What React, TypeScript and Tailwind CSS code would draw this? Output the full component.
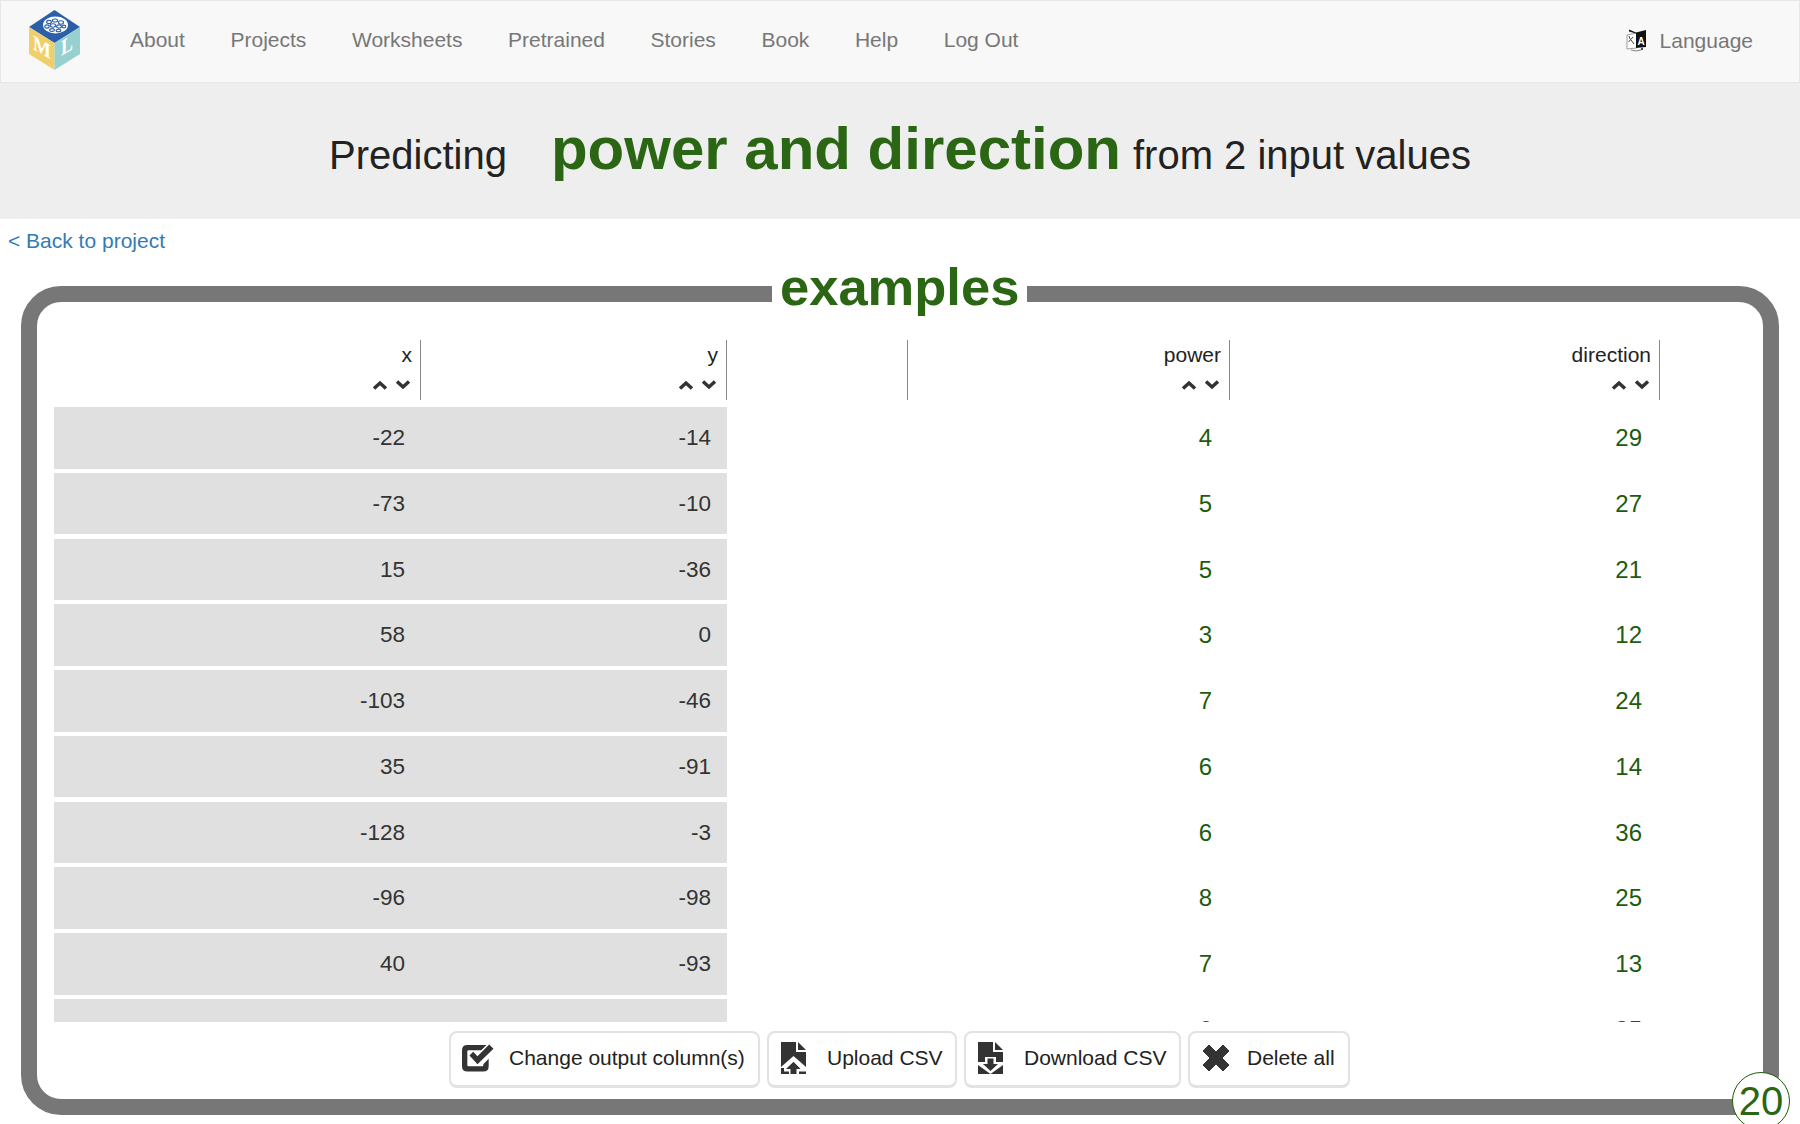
import React from 'react';

const navLinks = ['About', 'Projects', 'Worksheets', 'Pretrained', 'Stories', 'Book', 'Help', 'Log Out'];

const rows = [
  [-22, -14, 4, 29],
  [-73, -10, 5, 27],
  [15, -36, 5, 21],
  [58, 0, 3, 12],
  [-103, -46, 7, 24],
  [35, -91, 6, 14],
  [-128, -3, 6, 36],
  [-96, -98, 8, 25],
  [40, -93, 7, 13],
  [-66, -66, 6, 35],
];

const Logo = () => (
  <svg width="52" height="60" viewBox="0 0 52 60" className="shrink-0">
    <polygon points="25.5,0 51,17 25.5,33 0,17" fill="#2b5fa8" />
    <polygon points="0,17 25.5,33 25.5,60 0,44" fill="#f0cf6b" />
    <polygon points="51,17 25.5,33 25.5,60 51,44" fill="#98d0d0" />
    <ellipse cx="26.5" cy="15" rx="12.5" ry="8.5" fill="#fff" />
    <g fill="none" stroke="#2b5fa8" strokeWidth="1.1">
      <ellipse cx="20" cy="12" rx="2.4" ry="1.6" />
      <ellipse cx="26" cy="10.5" rx="2.6" ry="1.5" />
      <ellipse cx="32" cy="12.5" rx="2.5" ry="1.7" />
      <ellipse cx="18" cy="16.5" rx="2.2" ry="1.6" />
      <ellipse cx="24" cy="15.5" rx="2.6" ry="1.7" />
      <ellipse cx="30" cy="16.5" rx="2.4" ry="1.6" />
      <ellipse cx="35" cy="16.5" rx="1.8" ry="1.4" />
      <ellipse cx="23" cy="20" rx="2.4" ry="1.4" />
      <ellipse cx="29.5" cy="20.5" rx="2.4" ry="1.3" />
    </g>
    <text x="0" y="0" transform="matrix(0.9 0.52 0 1 4 39)" fill="#fff" fontFamily="'Liberation Serif', serif" fontWeight="700" fontSize="21">M</text>
    <text x="0" y="0" transform="matrix(0.85 -0.5 0 1.05 32 46)" fill="#fff" fontFamily="'Liberation Serif', serif" fontWeight="700" fontSize="21">L</text>
  </svg>
);

const LanguageIcon = () => (
  <svg width="21" height="23" viewBox="0 0 21 23" className="shrink-0">
    <path d="M1 6 L10.5 4 L10.5 19 L1 20 Z" fill="#fff" stroke="#888" strokeWidth="0.8" />
    <path d="M3 7 L4 10 M2.5 13 L7 8 M5 11 L8 15" stroke="#444" strokeWidth="1" fill="none" />
    <path d="M10 3.5 L20 1 L20 18 L10 19 Z" fill="#111" />
    <path d="M3 0.5 L10 3.5 L10 4.5 L3 2.5 Z" fill="#111" />
    <text x="11.5" y="15.5" fill="#fff" fontFamily="'Liberation Sans', sans-serif" fontWeight="700" fontSize="10">A</text>
    <path d="M5 21 Q10 23 15 21" stroke="#666" strokeWidth="0.8" fill="none" />
    <circle cx="16" cy="20" r="1" fill="#111" />
  </svg>
);

const CheckIcon = () => (
  <svg width="32" height="30" viewBox="1 3 30 26.5" className="shrink-0 ml-[-1px]">
    <path d="M24 4 H6 Q1 4 1 9 V24 Q1 29 6 29 H21 Q26 29 26 24 V17 L21 22 V23 Q21 24 20 24 H7 Q6 24 6 23 V10 Q6 9 7 9 H19 Z" fill="#333" />
    <path d="M8 14 L11.5 10.5 L15.5 14.5 L26.5 3.5 L30.5 7.5 L15.5 22 Z" fill="#333" />
  </svg>
);

const UploadIcon = () => (
  <svg width="25" height="32" viewBox="0 0 25 32" className="shrink-0">
    <path d="M0 0 H15 V10 H25 V27 H0 Z" fill="#333" />
    <path d="M17 0 L25 8 H17 Z" fill="#333" />
    <path d="M0 32 V25 L12.5 14 L25 25 V28 H20.5 L12.5 20 L4 28 V30 H8 V32 Z" fill="#fff" />
    <path d="M0 26 V32 H8 V29.5 H3 V26 Z" fill="#333" />
    <path d="M12.5 20 L19 26.5 H15.5 V32 H9.5 V26.5 H6 Z" fill="#333" />
    <path d="M18 29.5 H25 V32 H18 Z" fill="#333" />
  </svg>
);

const DownloadIcon = () => (
  <svg width="25" height="32" viewBox="0 0 25 32" className="shrink-0">
    <path d="M0 0 H15 V10 H25 V32 H0 Z" fill="#333" />
    <path d="M17 0 L25 8 H17 Z" fill="#333" />
    <path d="M7 15 H18 V20 H25 V23 L12.5 32 L0 23 V20 H7 Z" fill="#fff" />
    <path d="M9.5 16.5 H15.5 V22 H20 L12.5 29 L5 22 H9.5 Z" fill="#333" />
    <path d="M0 26 L6 32 H0 Z M25 26 L19 32 H25 Z" fill="#333" />
  </svg>
);

const CrossIcon = () => (
  <svg width="28" height="28" viewBox="0 0 28 28" className="shrink-0">
    <path d="M7 1 L14 8 L21 1 L27 7 L20 14 L27 21 L21 27 L14 20 L7 27 L1 21 L8 14 L1 7 Z" fill="#333" stroke="#333" strokeLinejoin="round" />
  </svg>
);

const SortArrows = () => (
  <div className="flex gap-[7px]">
    <svg width="16" height="10" viewBox="0 0 16 10">
      <path d="M2 8.5 L8 3 L14 8.5" fill="none" stroke="#333" strokeWidth="3.5" />
    </svg>
    <svg width="16" height="10" viewBox="0 0 16 10">
      <path d="M2 1.5 L8 7 L14 1.5" fill="none" stroke="#333" strokeWidth="3.5" />
    </svg>
  </div>
);

const HeaderCell = ({ label, sortable = true }: { label?: string; sortable?: boolean }) => (
  <div className="h-[60px] border-r border-[#888] flex flex-col items-end pr-2">
    <div className="h-[32px] leading-[32px] mt-[-1px] text-[21px] text-[#222]">{label}</div>
    {sortable && <div className="mt-[9px] mr-[1px]"><SortArrows /></div>}
  </div>
);

const ActionButton = ({ icon, label, gap, className }: { icon: React.ReactNode; label: string; gap: string; className: string }) => (
  <button className={`h-[57px] flex items-center rounded-lg border-2 border-[#e2e2e2] border-b-[3px] bg-white text-[21px] text-[#222] pl-3 pb-[2px] ${gap} ${className}`}>
    {icon}
    <span>{label}</span>
  </button>
);

export default function App() {
  return (
    <div className="h-screen overflow-hidden bg-white font-['Liberation_Sans',Arial,sans-serif] flex flex-col">
      <nav className="h-[83px] shrink-0 bg-[#f8f8f8] border border-[#e7e7e7] flex items-center pl-[28px]">
        <div className="mt-[-4px]"><Logo /></div>
        <div className="flex ml-[49px] gap-[45.6px] text-[21px] text-[#777] mt-[-4px]">
          {navLinks.map((link) => (
            <a key={link}>{link}</a>
          ))}
        </div>
        <div className="ml-auto flex items-center gap-[13px] text-[21px] text-[#777] pr-[46px] mt-[-2px]">
          <LanguageIcon />
          <span>Language</span>
        </div>
      </nav>

      <div className="h-[136px] shrink-0 bg-[#eeeeee] flex items-baseline justify-center pt-[21px] text-[40px] text-[#222]">
        <span>Predicting</span>
        <span className="ml-[44px] mr-[12px] text-[60px] font-bold text-[#2a6614]">power and direction</span>
        <span>from 2 input values</span>
      </div>

      <a className="h-[44px] shrink-0 pl-2 leading-[44px] text-[21px] text-[#337ab7]">&lt; Back to project</a>

      <div className="relative mx-[21px] mt-[23px] h-[829px] shrink-0 rounded-[40px] border-[16px] border-[#777] bg-white pt-[38px] pl-[17px] pr-[17px]">
        <div className="absolute left-[735px] top-[-45px] bg-white px-2 text-[52.5px] leading-[60px] font-bold text-[#2a6614]">examples</div>

        <div className="h-[682px] overflow-hidden">
          <div className="grid grid-cols-[367px_306px_181px_322px_430px] mb-[7px]">
            <HeaderCell label="x" />
            <HeaderCell label="y" />
            <HeaderCell sortable={false} />
            <HeaderCell label="power" />
            <HeaderCell label="direction" />
          </div>
          <div className="flex flex-col gap-[4.25px]">
            {rows.map((row, i) => (
              <div key={i} className="grid grid-cols-[367px_306px_181px_322px_430px] h-[61.5px] text-[24px] leading-[61.5px]">
                <div className="bg-[#e0e0e0] text-right text-[#333] text-[22.5px] pr-4">{row[0]}</div>
                <div className="bg-[#e0e0e0] text-right text-[#333] text-[22.5px] pr-4">{row[1]}</div>
                <div />
                <div className="text-right text-[#1d5c0c] pr-[18px]">{row[2]}</div>
                <div className="text-right text-[#1d5c0c] pr-[18px]">{row[3]}</div>
              </div>
            ))}
          </div>
        </div>

        <div className="flex justify-center gap-[7px] mt-[9px] pr-[1px]">
          <ActionButton icon={<CheckIcon />} label="Change output column(s)" gap="gap-[15px]" className="w-[311px]" />
          <ActionButton icon={<UploadIcon />} label="Upload CSV" gap="gap-[21px]" className="w-[190px]" />
          <ActionButton icon={<DownloadIcon />} label="Download CSV" gap="gap-[21px]" className="w-[217px]" />
          <ActionButton icon={<CrossIcon />} label="Delete all" gap="gap-[17px]" className="w-[162px]" />
        </div>

        <div className="absolute right-[-27px] bottom-[-31px] w-[58px] h-[58px] rounded-full border border-[#1d5c0c] bg-white flex items-center justify-center text-[40px] text-[#2a6614]">20</div>
      </div>
    </div>
  );
}
